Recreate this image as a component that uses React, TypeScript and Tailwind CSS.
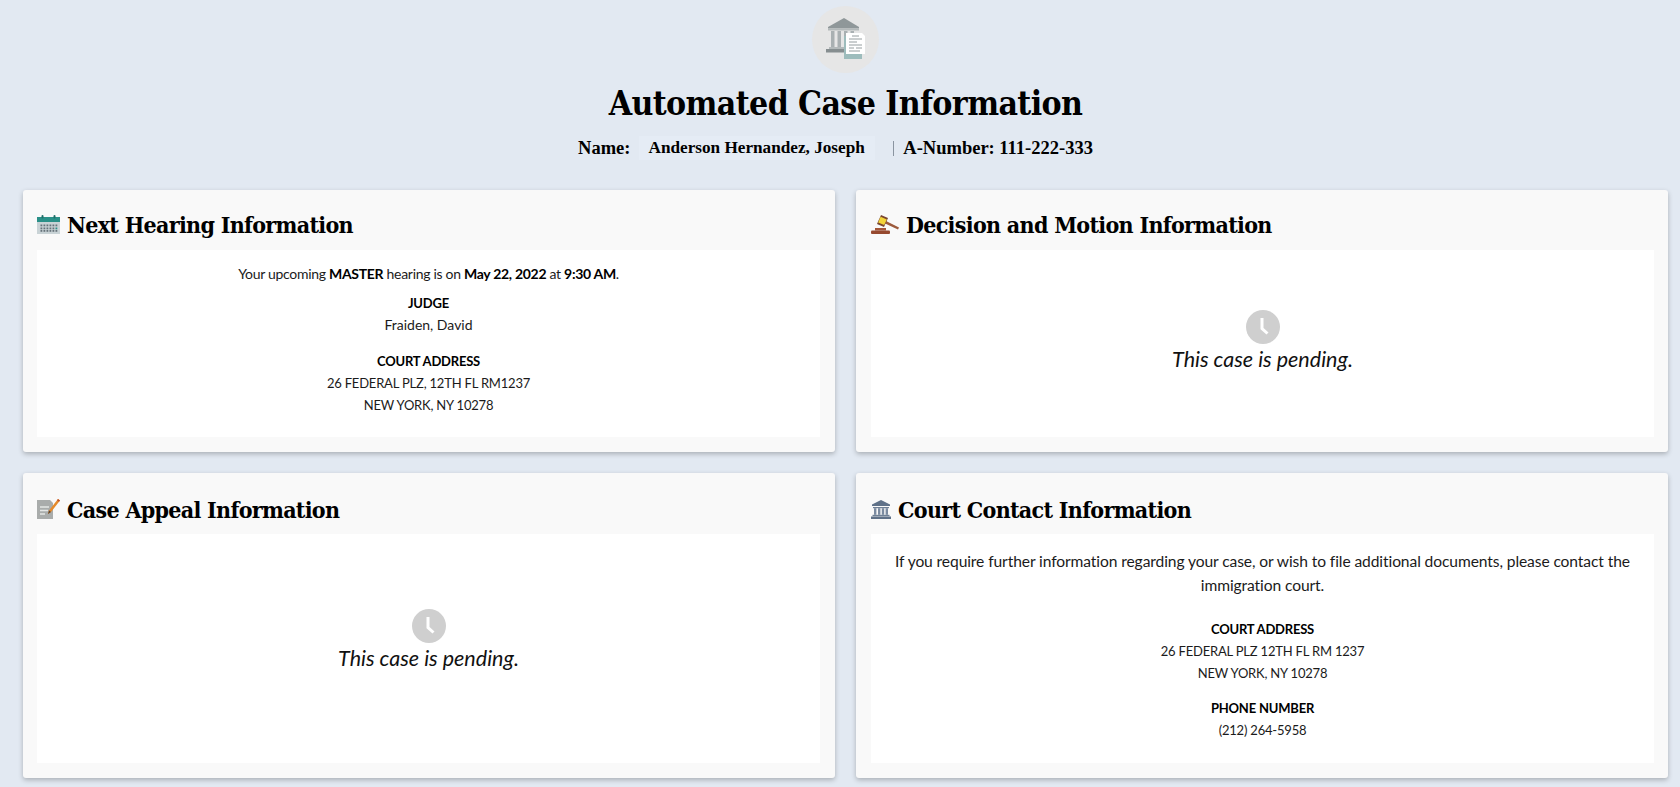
const bodyFont = "font-['Lato','Noto_Sans',sans-serif]";
const headFont = "font-['DejaVu_Serif_Condensed','DejaVu_Serif',serif]";

function CourtDocIcon() {
  return (
    <svg viewBox="0 0 39 41" className="mb-[2px] h-[41px] w-[39px]">
      <path d="M18 0 L33 9 V10.5 H2 V9 Z" fill="#8f9799" />
      <rect x="2" y="10.5" width="31" height="2" fill="#b3b9ba" />
      <rect x="5" y="13" width="3.5" height="16" fill="#a9b0b2" />
      <rect x="11.5" y="13" width="3.5" height="16" fill="#a9b0b2" />
      <rect x="18" y="13" width="3.5" height="16" fill="#a9b0b2" />
      <rect x="24.5" y="13" width="3.5" height="5" fill="#a9b0b2" />
      <rect x="3" y="29" width="20" height="2" fill="#b3b9ba" />
      <rect x="0" y="31" width="22" height="3.5" fill="#868e90" />
      <rect x="18" y="18" width="18" height="23" fill="#9dbcbc" />
      <path d="M20 15 H36 L39 18 V36 H20 Z" fill="#ffffff" />
      <path d="M26 18 H33 M23 21 H36 M23 24 H31 M23 27 H36 M23 30 H28 M30 30 H36 M23 33 H34" stroke="#8b9395" strokeWidth="0.9" />
    </svg>
  );
}

function CalendarIcon() {
  return (
    <svg viewBox="0 0 23 19" className="h-[19px] w-[23px] shrink-0">
      <rect x="0" y="5" width="23" height="14" fill="#c9d3d6" />
      <rect x="0" y="2" width="23" height="5" fill="#2a9088" />
      <rect x="4.5" y="0" width="2" height="3.5" rx="1" fill="#1f6f69" />
      <rect x="16.5" y="0" width="2" height="3.5" rx="1" fill="#1f6f69" />
      {[9.5, 12.5, 15].map((y) =>
        [3.5, 6.5, 9.5, 12.5, 15.5, 18.5].map((x) => (
          <rect key={`${x}-${y}`} x={x} y={y} width="1.8" height="1.8" fill={x === 18.5 && y === 12.5 ? "#2a9088" : "#66737a"} />
        ))
      )}
    </svg>
  );
}

function GavelIcon() {
  return (
    <svg viewBox="0 0 28 19" className="h-[19px] w-[28px] shrink-0">
      <path d="M14 5.5 L28 12.5 L27 14.5 L13 8 Z" fill="#9c5a3c" />
      <path d="M10 0 L17 3 L13 12 L6 9 Z" fill="#7a4530" />
      <path d="M9.6 1.8 L15.8 4.5 L13.2 10 L7.2 7.4 Z" fill="#f3d43a" />
      <rect x="4" y="13" width="11" height="2.5" fill="#a5563a" />
      <rect x="0" y="15.5" width="19" height="3.5" rx="1" fill="#96492f" />
    </svg>
  );
}

function AppealIcon() {
  return (
    <svg viewBox="0 0 23 20" className="h-[20px] w-[23px] shrink-0">
      <path d="M0 1 H13 L16 4 V20 H0 Z" fill="#a9acab" />
      <path d="M3 8 H12 M3 11.5 H11 M3 15 H8" stroke="#e4e6e5" strokeWidth="1.4" />
      <path d="M21 0 L23 1.5 L14 13 L11 15 L12 11.5 Z" fill="#e58a2c" />
      <path d="M12 11.5 L14 13 L11 15 Z" fill="#5a4634" />
      <path d="M21 0 L23 1.5 L22 2.8 L20 1.3 Z" fill="#c0502a" />
    </svg>
  );
}

function BankIcon() {
  return (
    <svg viewBox="0 0 20 19" className="h-[19px] w-[20px] shrink-0">
      <path d="M10 0 L19 4.5 V6 H1 V4.5 Z" fill="#5f7188" />
      <rect x="2" y="7" width="16" height="1.2" fill="#6f8096" />
      <rect x="3" y="8.2" width="2.4" height="6.6" fill="#7a8aa0" />
      <rect x="7" y="8.2" width="2.4" height="6.6" fill="#7a8aa0" />
      <rect x="10.8" y="8.2" width="2.4" height="6.6" fill="#7a8aa0" />
      <rect x="14.6" y="8.2" width="2.4" height="6.6" fill="#7a8aa0" />
      <rect x="1.5" y="14.8" width="17" height="1.4" fill="#6f8096" />
      <rect x="0" y="16.5" width="20" height="2.5" fill="#5f7188" />
    </svg>
  );
}

function ClockBadge() {
  return (
    <svg viewBox="0 0 34 34" className="h-[34px] w-[34px]">
      <circle cx="17" cy="17" r="17" fill="#cfcfcf" />
      <path d="M16 8 V18.5 L21.5 23.5" fill="none" stroke="#ffffff" strokeWidth="3" />
    </svg>
  );
}

function Pending({ className }: { className: string }) {
  return (
    <div className={`flex h-full flex-col items-center justify-center ${className}`}>
      <ClockBadge />
      <p className="text-[21.5px] leading-[30px] italic text-[#111]">This case is pending.</p>
    </div>
  );
}

function Card({
  icon,
  title,
  headClass,
  padClass,
  bodyClass,
  children,
}: {
  icon: React.ReactNode;
  title: string;
  headClass: string;
  padClass: string;
  bodyClass: string;
  children: React.ReactNode;
}) {
  return (
    <section className={`rounded-[3px] bg-[#f9f9f9] pb-[15px] shadow-[0_2px_5px_rgba(0,0,0,0.25)] ${padClass}`}>
      <div className={`flex items-center gap-[7px] ${headClass}`}>
        {icon}
        <h2 className={`${headFont} text-[23px] font-bold leading-none tracking-[-0.7px] text-black`}>{title}</h2>
      </div>
      <div className={`bg-white ${bodyClass}`}>{children}</div>
    </section>
  );
}

function Field({ label, lines, lineClass = "" }: { label: string; lines: string[]; lineClass?: string }) {
  return (
    <div className="text-center text-[13px] leading-[22px] tracking-[-0.2px] text-[#1b1b1b]">
      <div className="font-bold text-black">{label}</div>
      {lines.map((l) => (
        <div key={l} className={lineClass}>
          {l}
        </div>
      ))}
    </div>
  );
}

export default function App() {
  return (
    <div className={`min-h-[787px] overflow-hidden bg-[#e2e9f2] pb-[9px] pl-[23px] pr-[12px] pt-[6px] ${bodyFont}`}>
      <header className="flex h-[184px] flex-col items-center">
        <div className="flex h-[67px] w-[67px] items-center justify-center rounded-full bg-[#e6e6e6]">
          <CourtDocIcon />
        </div>
        <h1 className={`${headFont} mt-[8px] text-[33.5px] font-bold leading-[46px] tracking-[-0.6px] text-black`}>Automated Case Information</h1>
        <div className="mt-[9px] mr-[20px] flex items-center font-['Liberation_Serif',serif] text-[18.5px] font-bold leading-[24px] text-black">
          <span>Name:</span>
          <span className="ml-[8px] bg-[#e5ecf5] px-[10px] text-[17.2px]">Anderson Hernandez, Joseph</span>
          <span className="ml-[18px] mr-[9px] h-[15px] w-[1.5px] bg-[#8a94a0]" />
          <span>A-Number: 111-222-333</span>
        </div>
      </header>

      <main className="grid grid-cols-2 gap-x-[21px] gap-y-[21px]">
        <Card icon={<CalendarIcon />} title="Next Hearing Information" headClass="h-[60px] pt-[8px]" padClass="pl-[14px] pr-[15px]" bodyClass="h-[187px]">
          <div className="pt-[13px] text-center">
            <p className="text-[14px] leading-[22px] tracking-[-0.3px] text-[#1b1b1b]">
              Your upcoming <b className="text-black">MASTER</b> hearing is on <b className="text-black">May 22, 2022</b> at <b className="text-black">9:30 AM</b>.
            </p>
            <div className="mt-[7px]">
              <Field label="JUDGE" lines={["Fraiden, David"]} lineClass="text-[14px] tracking-normal" />
            </div>
            <div className="mt-[14px]">
              <Field label="COURT ADDRESS" lines={["26 FEDERAL PLZ, 12TH FL RM1237", "NEW YORK, NY 10278"]} />
            </div>
          </div>
        </Card>

        <Card icon={<GavelIcon />} title="Decision and Motion Information" headClass="h-[60px] pt-[8px]" padClass="pl-[15px] pr-[14px]" bodyClass="h-[187px]">
          <Pending className="pb-[3px]" />
        </Card>

        <Card icon={<AppealIcon />} title="Case Appeal Information" headClass="h-[61px] pt-[11px]" padClass="pl-[14px] pr-[15px]" bodyClass="h-[229px]">
          <Pending className="pb-[16px]" />
        </Card>

        <Card icon={<BankIcon />} title="Court Contact Information" headClass="h-[61px] pt-[11px]" padClass="pl-[15px] pr-[14px]" bodyClass="h-[229px]">
          <div className="px-[18px] pt-[15px]">
            <p className="text-center text-[15.6px] leading-[24px] tracking-[-0.1px] text-[#1b1b1b]">
              If you require further information regarding your case, or wish to file additional documents, please contact the immigration court.
            </p>
            <div className="mt-[21px]">
              <Field label="COURT ADDRESS" lines={["26 FEDERAL PLZ 12TH FL RM 1237", "NEW YORK, NY 10278"]} />
            </div>
            <div className="mt-[13px]">
              <Field label="PHONE NUMBER" lines={["(212) 264-5958"]} />
            </div>
          </div>
        </Card>
      </main>
    </div>
  );
}
